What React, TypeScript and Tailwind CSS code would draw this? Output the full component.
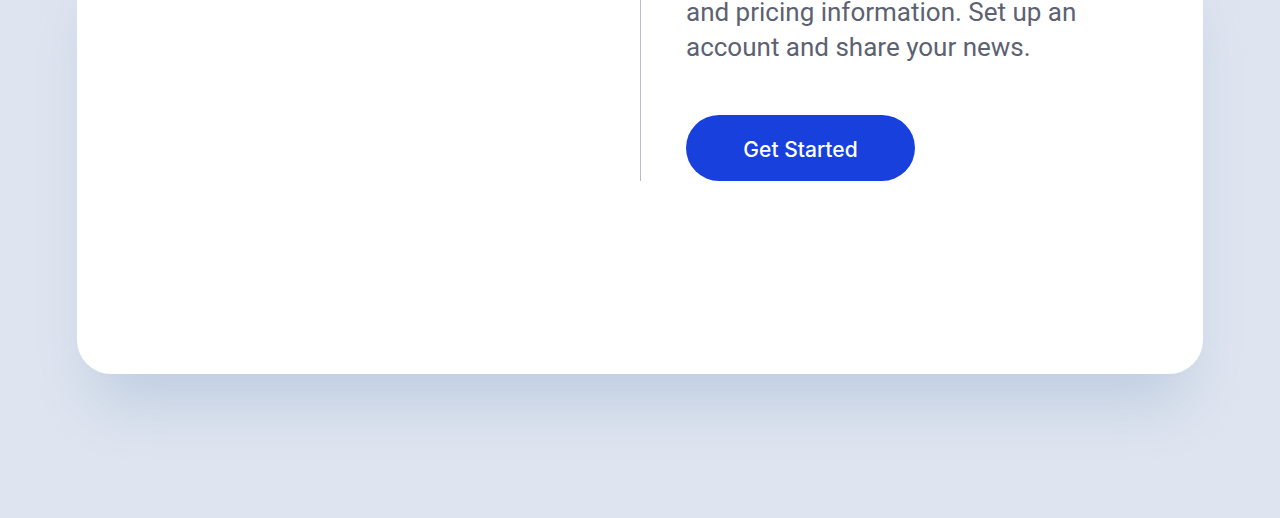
import React from "react";

const App = () => {
  return (
    <div className="h-[518px] w-full overflow-hidden bg-[#dfe5f0] px-[77px]">
      <div className="mt-[-60px] flex rounded-[34px] bg-white pb-[193px] shadow-[0_45px_60px_-15px_rgba(170,190,215,0.6)]">
        <div className="w-[563px] shrink-0" />
        <div className="flex flex-col border-l border-[#b9bcc6] pl-[45px] pt-[55px]">
          <p className="font-['Roboto',sans-serif] text-[26px] leading-[35px] text-[#5c6272]">
            and pricing information. Set up an
            <br />
            account and share your news.
          </p>
          <button className="mt-[50px] flex h-[66px] w-[229px] items-center justify-center rounded-full bg-[#1740dd] pt-[4px] font-['Inter',sans-serif] text-[21px] font-medium text-white">
            Get Started
          </button>
        </div>
      </div>
    </div>
  );
};

export default App;
